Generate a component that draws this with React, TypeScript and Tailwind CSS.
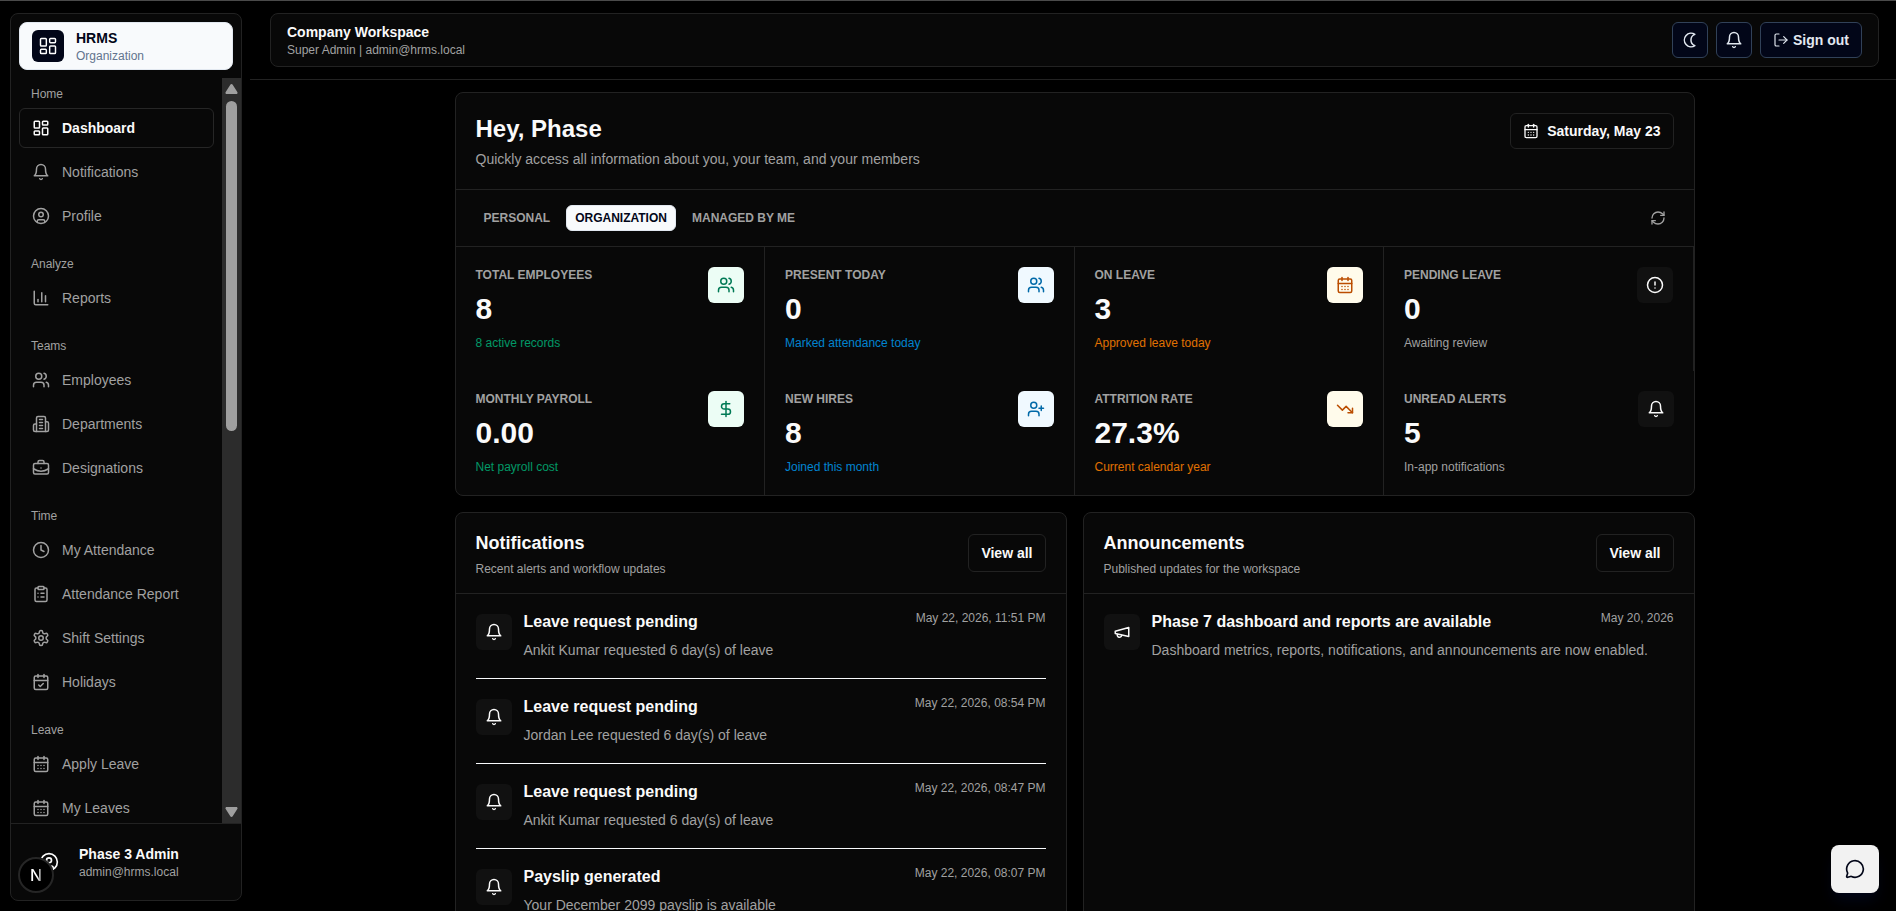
import type { ComponentType, ReactNode } from "react";
import clsx from "clsx";
import {
  BriefcaseBusiness,
  CalendarCheck,
  CalendarDays,
  ChartColumn,
  CircleAlert,
  CircleUser,
  ClipboardList,
  Clock,
  DollarSign,
  LayoutDashboard,
  LogOut,
  MessageCircle,
  RefreshCw,
  TrendingDown,
  UserPlus,
  Users,
} from "lucide-react";

type IconProps = { className?: string; strokeWidth?: number };
type Icon = ComponentType<IconProps>;

function Svg({ className, strokeWidth = 2, children }: IconProps & { children: ReactNode }) {
  return (
    <svg
      viewBox="0 0 24 24"
      fill="none"
      stroke="currentColor"
      strokeWidth={strokeWidth}
      strokeLinecap="round"
      strokeLinejoin="round"
      className={className}
      aria-hidden="true"
    >
      {children}
    </svg>
  );
}

const Bell: Icon = (props) => (
  <Svg {...props}>
    <path d="M6 8a6 6 0 0 1 12 0c0 7 3 9 3 9H3s3-2 3-9" />
    <path d="M10.3 21a1.94 1.94 0 0 0 3.4 0" />
  </Svg>
);

const Building: Icon = (props) => (
  <Svg {...props}>
    <path d="M6 22V4a2 2 0 0 1 2-2h8a2 2 0 0 1 2 2v18Z" />
    <path d="M6 12H4a2 2 0 0 0-2 2v6a2 2 0 0 0 2 2h2" />
    <path d="M18 9h2a2 2 0 0 1 2 2v9a2 2 0 0 1-2 2h-2" />
    <path d="M10 6h4M10 10h4M10 14h4M10 18h4" />
  </Svg>
);

const Gear: Icon = (props) => (
  <Svg {...props}>
    <path d="M12.22 2h-.44a2 2 0 0 0-2 2v.18a2 2 0 0 1-1 1.73l-.43.25a2 2 0 0 1-2 0l-.15-.08a2 2 0 0 0-2.73.73l-.22.38a2 2 0 0 0 .73 2.73l.15.1a2 2 0 0 1 1 1.72v.51a2 2 0 0 1-1 1.74l-.15.09a2 2 0 0 0-.73 2.73l.22.38a2 2 0 0 0 2.73.73l.15-.08a2 2 0 0 1 2 0l.43.25a2 2 0 0 1 1 1.73V20a2 2 0 0 0 2 2h.44a2 2 0 0 0 2-2v-.18a2 2 0 0 1 1-1.73l.43-.25a2 2 0 0 1 2 0l.15.08a2 2 0 0 0 2.73-.73l.22-.39a2 2 0 0 0-.73-2.73l-.15-.08a2 2 0 0 1-1-1.74v-.5a2 2 0 0 1 1-1.74l.15-.09a2 2 0 0 0 .73-2.73l-.22-.38a2 2 0 0 0-2.73-.73l-.15.08a2 2 0 0 1-2 0l-.43-.25a2 2 0 0 1-1-1.73V4a2 2 0 0 0-2-2z" />
    <circle cx="12" cy="12" r="3" />
  </Svg>
);

const Megaphone: Icon = (props) => (
  <Svg {...props}>
    <path d="m3 11 18-5v12L3 14v-3z" />
    <path d="M11.6 16.8a3 3 0 1 1-5.8-1.6" />
  </Svg>
);

const Crescent: Icon = (props) => (
  <Svg {...props}>
    <path d="M18.5 4.5a9 9 0 1 0 0 15 8 8 0 0 1 0-15z" />
  </Svg>
);

const NAV: { title: string; items: { label: string; icon: Icon; active?: boolean }[] }[] = [
  {
    title: "Home",
    items: [
      { label: "Dashboard", icon: LayoutDashboard, active: true },
      { label: "Notifications", icon: Bell },
      { label: "Profile", icon: CircleUser },
    ],
  },
  { title: "Analyze", items: [{ label: "Reports", icon: ChartColumn }] },
  {
    title: "Teams",
    items: [
      { label: "Employees", icon: Users },
      { label: "Departments", icon: Building },
      { label: "Designations", icon: BriefcaseBusiness },
    ],
  },
  {
    title: "Time",
    items: [
      { label: "My Attendance", icon: Clock },
      { label: "Attendance Report", icon: ClipboardList },
      { label: "Shift Settings", icon: Gear },
      { label: "Holidays", icon: CalendarCheck },
    ],
  },
  {
    title: "Leave",
    items: [
      { label: "Apply Leave", icon: CalendarDays },
      { label: "My Leaves", icon: CalendarDays },
    ],
  },
];

const TONES = {
  green: { box: "bg-emerald-50 text-emerald-700", note: "text-emerald-600" },
  blue: { box: "bg-sky-50 text-sky-700", note: "text-sky-600" },
  amber: { box: "bg-amber-50 text-amber-700", note: "text-amber-600" },
  neutral: { box: "bg-[#111111] text-[#fafafa]", note: "text-[#a1a1a1]" },
};

const STATS: { label: string; value: string; note: string; tone: keyof typeof TONES; icon: Icon }[] = [
  { label: "Total Employees", value: "8", note: "8 active records", tone: "green", icon: Users },
  { label: "Present Today", value: "0", note: "Marked attendance today", tone: "blue", icon: Users },
  { label: "On Leave", value: "3", note: "Approved leave today", tone: "amber", icon: CalendarDays },
  { label: "Pending Leave", value: "0", note: "Awaiting review", tone: "neutral", icon: CircleAlert },
  { label: "Monthly Payroll", value: "0.00", note: "Net payroll cost", tone: "green", icon: DollarSign },
  { label: "New Hires", value: "8", note: "Joined this month", tone: "blue", icon: UserPlus },
  { label: "Attrition Rate", value: "27.3%", note: "Current calendar year", tone: "amber", icon: TrendingDown },
  { label: "Unread Alerts", value: "5", note: "In-app notifications", tone: "neutral", icon: Bell },
];

type FeedItem = { title: string; body: string; date: string };

const NOTIFICATIONS: FeedItem[] = [
  { title: "Leave request pending", body: "Ankit Kumar requested 6 day(s) of leave", date: "May 22, 2026, 11:51 PM" },
  { title: "Leave request pending", body: "Jordan Lee requested 6 day(s) of leave", date: "May 22, 2026, 08:54 PM" },
  { title: "Leave request pending", body: "Ankit Kumar requested 6 day(s) of leave", date: "May 22, 2026, 08:47 PM" },
  { title: "Payslip generated", body: "Your December 2099 payslip is available", date: "May 22, 2026, 08:07 PM" },
];

const ANNOUNCEMENTS: FeedItem[] = [
  {
    title: "Phase 7 dashboard and reports are available",
    body: "Dashboard metrics, reports, notifications, and announcements are now enabled.",
    date: "May 20, 2026",
  },
];

function Sidebar() {
  return (
    <div className="w-[250px] shrink-0 pt-3 pr-2 pb-[10px] pl-[10px]">
      <aside className="flex h-full flex-col overflow-hidden rounded-lg border border-[#222222] bg-[#080808]">
        <div className="p-2">
          <div className="flex h-12 items-center gap-3 rounded-lg border border-slate-200 bg-slate-50 px-3">
            <span className="flex size-8 items-center justify-center rounded-md bg-slate-950 text-white">
              <LayoutDashboard className="size-5" strokeWidth={1.75} />
            </span>
            <div>
              <p className="text-sm font-bold text-slate-950">HRMS</p>
              <p className="text-xs text-slate-500">Organization</p>
            </div>
          </div>
        </div>

        <div className="flex min-h-0 flex-1">
          <nav className="flex flex-1 flex-col gap-5 overflow-hidden p-2">
            {NAV.map((group) => (
              <div key={group.title}>
                <p className="mb-[6px] px-3 text-xs text-[#a1a1a1]">{group.title}</p>
                <ul className="flex flex-col gap-1">
                  {group.items.map(({ label, icon: ItemIcon, active }) => (
                    <li key={label}>
                      <a
                        href="#"
                        className={clsx(
                          "flex h-10 items-center gap-3 rounded-md border px-3 text-sm",
                          active ? "border-[#262626] font-bold text-[#fafafa]" : "border-transparent text-[#a1a1a1]"
                        )}
                      >
                        <ItemIcon className="size-[18px]" />
                        {label}
                      </a>
                    </li>
                  ))}
                </ul>
              </div>
            ))}
          </nav>
          {/* Scroll track */}
          <div className="flex w-[19px] flex-col items-center bg-[#2c2c2c] py-[6px] text-[#9f9f9f]" aria-hidden="true">
            <svg viewBox="0 0 13 10" className="h-[10px] w-[13px]" fill="currentColor">
              <path d="M5.3.8a1.4 1.4 0 0 1 2.4 0l4.6 7.1c.6.9.1 2.1-1 2.1H1.7c-1.1 0-1.6-1.2-1-2.1z" />
            </svg>
            <div className="mt-[7px] h-[330px] w-[11px] rounded-full bg-[#9f9f9f]" />
            <svg viewBox="0 0 13 10" className="mt-auto h-[10px] w-[13px]" fill="currentColor">
              <path d="M5.3 9.2a1.4 1.4 0 0 0 2.4 0l4.6-7.1c.6-.9.1-2.1-1-2.1H1.7C.6 0 .1 1.2.7 2.1z" />
            </svg>
          </div>
        </div>

        <div className="flex items-center gap-3 border-t border-[#222222] px-5 py-5">
          <span className="flex size-9 items-center justify-center text-[#fafafa]">
            <CircleUser className="size-5" />
          </span>
          <div>
            <p className="text-sm font-bold text-[#fafafa]">Phase 3 Admin</p>
            <p className="text-xs text-[#a1a1a1]">admin@hrms.local</p>
          </div>
        </div>
      </aside>
    </div>
  );
}

function Header() {
  const button = "flex h-9 items-center justify-center rounded-md border border-slate-700 bg-slate-950 text-slate-200";
  return (
    <header className="border-b border-[#222222] pt-3 pr-[17px] pb-3 pl-5">
      <div className="flex items-center justify-between rounded-lg border border-[#222222] bg-[#080808] px-4 py-2">
        <div>
          <p className="text-sm font-bold text-[#fafafa]">Company Workspace</p>
          <p className="text-xs text-[#a1a1a1]">Super Admin | admin@hrms.local</p>
        </div>
        <div className="flex gap-2">
          <button type="button" aria-label="Toggle theme" className={clsx(button, "w-9")}>
            <Crescent className="size-[18px]" />
          </button>
          <button type="button" aria-label="Notifications" className={clsx(button, "w-9")}>
            <Bell className="size-[18px]" />
          </button>
          <button type="button" className={clsx(button, "gap-1 px-3 text-sm font-bold")}>
            <LogOut className="size-4" strokeWidth={1.75} />
            Sign out
          </button>
        </div>
      </div>
    </header>
  );
}

function Overview() {
  return (
    <section className="overflow-hidden rounded-lg border border-[#222222] bg-[#080808]">
      <div className="flex items-start justify-between border-b border-[#222222] p-5">
        <div>
          <h1 className="text-2xl font-bold text-[#fafafa]">Hey, Phase</h1>
          <p className="mt-1 text-sm text-[#a1a1a1]">
            Quickly access all information about you, your team, and your members
          </p>
        </div>
        <button
          type="button"
          className="flex h-9 items-center gap-2 rounded-md border border-[#222222] px-3 text-sm font-bold text-[#fafafa]"
        >
          <CalendarDays className="size-4" />
          Saturday, May 23
        </button>
      </div>

      <div className="flex items-center justify-between border-b border-[#222222] px-5 py-3">
        <div className="flex gap-2 text-xs font-bold text-[#a1a1a1]">
          <button type="button" className="h-[26px] px-2 uppercase">
            Personal
          </button>
          <button
            type="button"
            className="h-[26px] rounded-md border border-slate-200 bg-slate-50 px-2 text-slate-950 uppercase"
          >
            Organization
          </button>
          <button type="button" className="h-[26px] px-2 uppercase">
            Managed by me
          </button>
        </div>
        <button type="button" aria-label="Refresh" className="flex size-8 items-center justify-center text-[#a1a1a1]">
          <RefreshCw className="size-4" />
        </button>
      </div>

      <div className="grid grid-cols-4">
        {STATS.map(({ label, value, note, tone, icon: StatIcon }) => (
          <div key={label} className="flex items-start justify-between border-r border-[#222222] p-5 last:border-r-0">
            <div>
              <p className="text-xs font-bold text-[#a1a1a1] uppercase">{label}</p>
              <p className="my-2 text-3xl font-bold text-[#fafafa]">{value}</p>
              <p className={clsx("text-xs", TONES[tone].note)}>{note}</p>
            </div>
            <span className={clsx("flex size-9 shrink-0 items-center justify-center rounded-md", TONES[tone].box)}>
              <StatIcon className="size-[18px]" />
            </span>
          </div>
        ))}
      </div>
    </section>
  );
}

function FeedCard({
  title,
  subtitle,
  items,
  icon: FeedIcon,
}: {
  title: string;
  subtitle: string;
  items: FeedItem[];
  icon: Icon;
}) {
  return (
    <section className="rounded-lg border border-[#222222] bg-[#080808]">
      <div className="flex items-center justify-between border-b border-[#222222] px-5 py-4">
        <div>
          <h2 className="text-lg font-bold text-[#fafafa]">{title}</h2>
          <p className="mt-1 text-xs text-[#a1a1a1]">{subtitle}</p>
        </div>
        <button type="button" className="rounded-md border border-[#222222] px-3 py-2 text-sm font-bold text-[#fafafa]">
          View all
        </button>
      </div>
      <ul className="divide-y divide-slate-50 px-5">
        {items.map((item) => (
          <li key={item.date} className="flex items-start gap-3 py-4">
            <span className="mt-1 flex size-9 shrink-0 items-center justify-center rounded-md bg-[#111111] text-[#fafafa]">
              <FeedIcon className="size-[18px]" />
            </span>
            <div className="min-w-0 flex-1">
              <div className="flex items-start justify-between gap-3">
                <h3 className="text-base font-bold text-[#fafafa]">{item.title}</h3>
                <time className="shrink-0 text-xs text-[#a1a1a1]">{item.date}</time>
              </div>
              <p className="mt-1 text-sm leading-6 text-[#a1a1a1]">{item.body}</p>
            </div>
          </li>
        ))}
      </ul>
    </section>
  );
}

export default function App() {
  return (
    <div className="flex h-screen overflow-hidden border-t border-[#4a4a4a] bg-black font-['Liberation_Sans',Arial,sans-serif]">
      <Sidebar />
      <div className="flex min-w-0 flex-1 flex-col">
        <Header />
        <main className="min-h-0 flex-1 overflow-y-auto pr-px pl-1 [scrollbar-width:none]">
          <div className="mx-auto flex max-w-7xl flex-col gap-4 px-5 py-3">
            <Overview />
            <div className="grid grid-cols-2 gap-4">
              <FeedCard
                title="Notifications"
                subtitle="Recent alerts and workflow updates"
                items={NOTIFICATIONS}
                icon={Bell}
              />
              <FeedCard
                title="Announcements"
                subtitle="Published updates for the workspace"
                items={ANNOUNCEMENTS}
                icon={Megaphone}
              />
            </div>
          </div>
        </main>
      </div>

      {/* Dev tools badge */}
      <button
        type="button"
        aria-label="Open dev tools"
        className="fixed bottom-[18px] left-[18px] flex size-9 items-center justify-center rounded-full border-2 border-[#262626] bg-black"
      >
        <span className="bg-linear-to-r from-white from-60% to-white/40 bg-clip-text font-['Inter',sans-serif] text-base leading-5 font-medium text-transparent">
          N
        </span>
      </button>

      <button
        type="button"
        aria-label="Open chat"
        className="fixed right-[17px] bottom-[18px] flex size-12 items-center justify-center rounded-lg bg-[#f2f2f2] text-slate-950 shadow-lg shadow-slate-950"
      >
        <MessageCircle className="size-5" />
      </button>
    </div>
  );
}
